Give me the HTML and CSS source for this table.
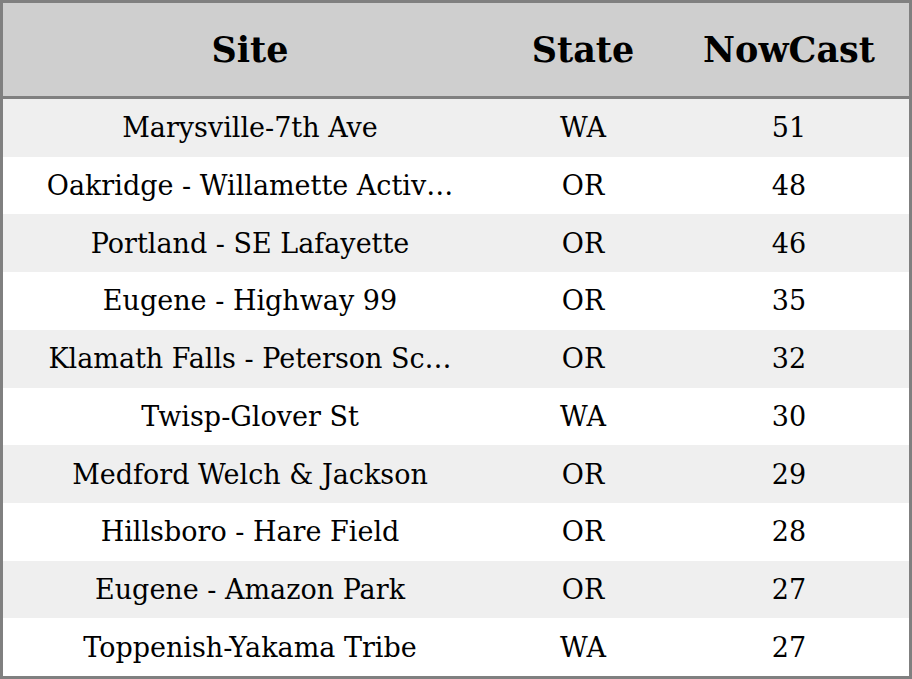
FILE: index.html
```html
<!DOCTYPE html>
<html>
<head>
<meta charset="utf-8">
<link rel="stylesheet" href="styles.css">
</head>
<body>
<div class="table">
  <div class="row head">
    <div class="cell site">Site</div>
    <div class="cell state">State</div>
    <div class="cell now">NowCast</div>
  </div>
  <div class="row odd"><div class="cell site">Marysville-7th Ave</div><div class="cell state">WA</div><div class="cell now">51</div></div>
  <div class="row"><div class="cell site">Oakridge - Willamette Activ…</div><div class="cell state">OR</div><div class="cell now">48</div></div>
  <div class="row odd"><div class="cell site">Portland - SE Lafayette</div><div class="cell state">OR</div><div class="cell now">46</div></div>
  <div class="row"><div class="cell site">Eugene - Highway 99</div><div class="cell state">OR</div><div class="cell now">35</div></div>
  <div class="row odd"><div class="cell site">Klamath Falls - Peterson Sc…</div><div class="cell state">OR</div><div class="cell now">32</div></div>
  <div class="row"><div class="cell site">Twisp-Glover St</div><div class="cell state">WA</div><div class="cell now">30</div></div>
  <div class="row odd"><div class="cell site">Medford Welch &amp; Jackson</div><div class="cell state">OR</div><div class="cell now">29</div></div>
  <div class="row"><div class="cell site">Hillsboro - Hare Field</div><div class="cell state">OR</div><div class="cell now">28</div></div>
  <div class="row odd"><div class="cell site">Eugene - Amazon Park</div><div class="cell state">OR</div><div class="cell now">27</div></div>
  <div class="row"><div class="cell site">Toppenish-Yakama Tribe</div><div class="cell state">WA</div><div class="cell now">27</div></div>
</div>
</body>
</html>
```
FILE: styles.css
```css
html, body {
  margin: 0;
  padding: 0;
  background: #ffffff;
}
.table {
  box-sizing: border-box;
  width: 912px;
  height: 679px;
  border: 3px solid #808080;
  display: flex;
  flex-direction: column;
  font-family: "DejaVu Serif", serif;
  color: #000;
}
.row {
  flex: 1 1 0;
  display: grid;
  grid-template-columns: 494px 172px 1fr;
  align-items: center;
  background: #ffffff;
  font-size: 27px;
}
.row.odd {
  background: #efefef;
}
.row.head {
  flex: 0 0 93px;
  background: #cfcfcf;
  border-bottom: 3px solid #808080;
  font-weight: bold;
  font-size: 35px;
}
.cell {
  text-align: center;
  white-space: nowrap;
  overflow: hidden;
}
```
